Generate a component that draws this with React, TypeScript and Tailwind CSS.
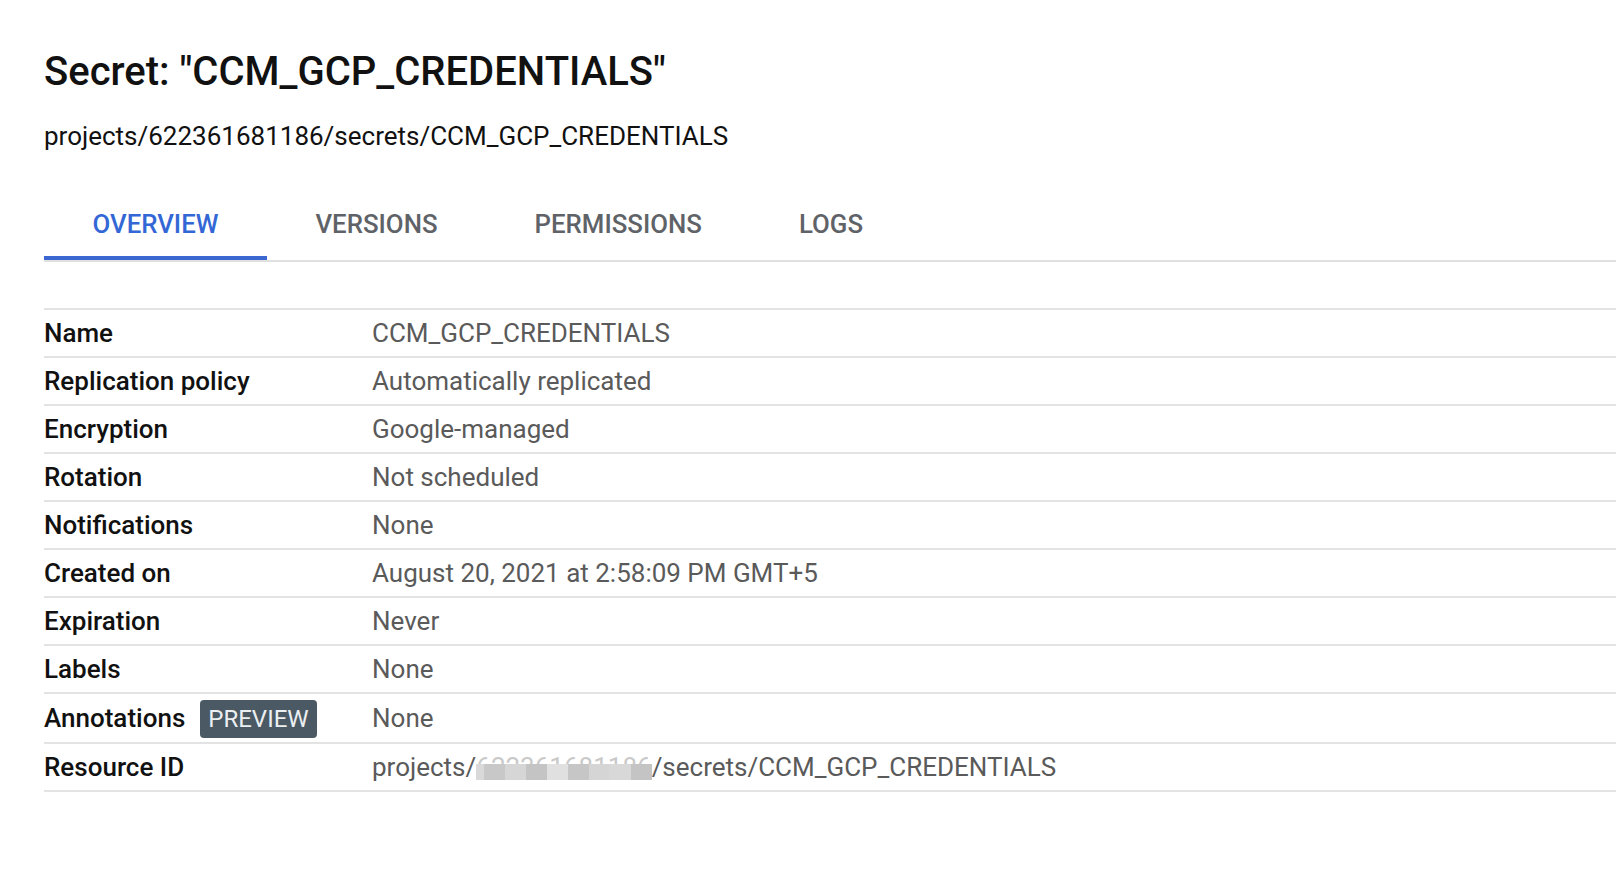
import React from "react";

interface DetailRow {
  label: string;
  value: React.ReactNode;
  preview?: boolean;
}

const tabs = ["OVERVIEW", "VERSIONS", "PERMISSIONS", "LOGS"];

// pixelated redaction blocks over the project number
const redactBlocks = [
  { w: 8, c: "bg-[#d9d9d9]" },
  { w: 21, c: "bg-[#c8c8c8]" },
  { w: 21, c: "bg-[#d6d6d6]" },
  { w: 21, c: "bg-[#c4c4c4]" },
  { w: 21, c: "bg-[#e0e0e0]" },
  { w: 21, c: "bg-[#c6c6c6]" },
  { w: 20, c: "bg-[#d5d5d5]" },
  { w: 22, c: "bg-[#d8d8d8]" },
  { w: 21, c: "bg-[#c4c4c4]" },
];

const ResourceId = () => (
  <span>
    projects/
    <span className="relative text-[#c9c9c9]">
      622361681186
      <span className="absolute left-0 top-[12px] h-[16px] flex">
        {redactBlocks.map((b, i) => (
          <span key={i} className={`block h-full ${b.c}`} style={{ width: b.w }} />
        ))}
      </span>
    </span>
    /secrets/CCM_GCP_CREDENTIALS
  </span>
);

const rows: DetailRow[] = [
  { label: "Name", value: "CCM_GCP_CREDENTIALS" },
  { label: "Replication policy", value: "Automatically replicated" },
  { label: "Encryption", value: "Google-managed" },
  { label: "Rotation", value: "Not scheduled" },
  { label: "Notifications", value: "None" },
  { label: "Created on", value: "August 20, 2021 at 2:58:09 PM GMT+5" },
  { label: "Expiration", value: "Never" },
  { label: "Labels", value: "None" },
  { label: "Annotations", value: "None", preview: true },
  { label: "Resource ID", value: <ResourceId /> },
];

export default function App() {
  return (
    <div
      className="min-h-screen bg-white pl-[44px] pt-[48px]"
      style={{ fontFamily: "Roboto, 'Liberation Sans', sans-serif" }}
    >
      {/* Header */}
      <h1 className="text-[40px] leading-[48px] font-medium text-[#111]">
        Secret: "CCM_GCP_CREDENTIALS"
      </h1>
      <div className="mt-[24px] text-[26px] leading-[32px] text-[#111]">
        projects/622361681186/secrets/CCM_GCP_CREDENTIALS
      </div>

      {/* Tabs */}
      <div className="mt-[36px] flex border-b-2 border-[#e0e0e0]">
        {tabs.map((tab, i) => (
          <div
            key={tab}
            className={`relative h-[72px] px-[48.5px] flex items-center text-[25.8px] font-medium ${
              i === 0 ? "text-[#3367d6]" : "text-[#5f6368]"
            }`}
          >
            {tab}
            {i === 0 && (
              <div className="absolute left-0 right-0 bottom-0 h-[4px] bg-[#3b67d1]" />
            )}
          </div>
        ))}
      </div>

      {/* Details table */}
      <div className="mt-[46px] border-t-2 border-[#e3e3e3]">
        {rows.map((row) => (
          <div
            key={row.label}
            className={`flex items-center border-b-2 border-[#e3e3e3] pt-[1px] ${
              row.preview ? "h-[47px]" : "h-[45px]"
            } box-content`}
          >
            <div className="w-[328px] shrink-0 flex items-center text-[26px] font-medium text-[#111]">
              {row.label}
              {row.preview && (
                <span className="ml-[15px] h-[38px] px-[8px] rounded-[4px] bg-[#4a5963] text-[#eceff1] text-[24px] font-normal flex items-center">
                  PREVIEW
                </span>
              )}
            </div>
            <div className="text-[26px] text-[#5a5a5a] whitespace-nowrap">{row.value}</div>
          </div>
        ))}
      </div>
    </div>
  );
}
